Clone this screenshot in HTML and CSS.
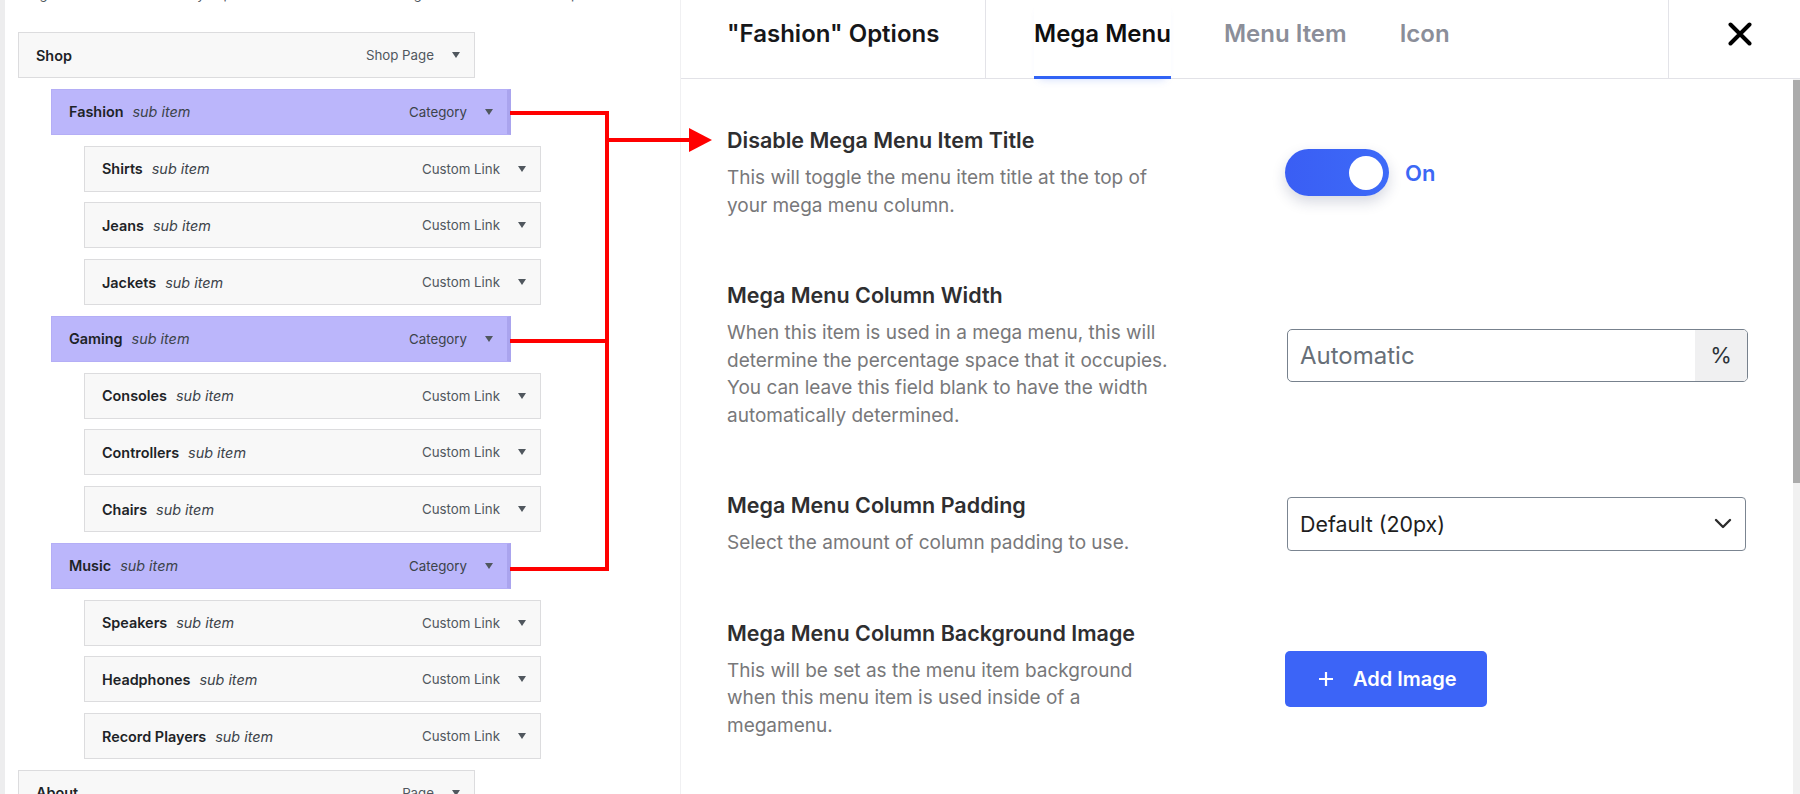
FILE: index.html
```html
<!DOCTYPE html>
<html lang="en">
<head>
<meta charset="utf-8">
<title>Mega Menu Options</title>
<link rel="stylesheet" href="styles.css">
</head>
<body>
<div class="page">
  <aside class="menu-panel">
    <p class="hint">Drag the items into the order you prefer. Click the arrow on the right of the item to reveal options.</p>
    <ul class="menu-list">
      <li class="item depth-0"><span class="name">Shop</span><span class="type">Shop Page</span><span class="caret"></span></li>
      <li class="item depth-1 hl"><span class="name">Fashion</span><span class="sub">sub item</span><span class="type">Category</span><span class="caret"></span></li>
      <li class="item depth-2"><span class="name">Shirts</span><span class="sub">sub item</span><span class="type">Custom Link</span><span class="caret"></span></li>
      <li class="item depth-2"><span class="name">Jeans</span><span class="sub">sub item</span><span class="type">Custom Link</span><span class="caret"></span></li>
      <li class="item depth-2"><span class="name">Jackets</span><span class="sub">sub item</span><span class="type">Custom Link</span><span class="caret"></span></li>
      <li class="item depth-1 hl"><span class="name">Gaming</span><span class="sub">sub item</span><span class="type">Category</span><span class="caret"></span></li>
      <li class="item depth-2"><span class="name">Consoles</span><span class="sub">sub item</span><span class="type">Custom Link</span><span class="caret"></span></li>
      <li class="item depth-2"><span class="name">Controllers</span><span class="sub">sub item</span><span class="type">Custom Link</span><span class="caret"></span></li>
      <li class="item depth-2"><span class="name">Chairs</span><span class="sub">sub item</span><span class="type">Custom Link</span><span class="caret"></span></li>
      <li class="item depth-1 hl"><span class="name">Music</span><span class="sub">sub item</span><span class="type">Category</span><span class="caret"></span></li>
      <li class="item depth-2"><span class="name">Speakers</span><span class="sub">sub item</span><span class="type">Custom Link</span><span class="caret"></span></li>
      <li class="item depth-2"><span class="name">Headphones</span><span class="sub">sub item</span><span class="type">Custom Link</span><span class="caret"></span></li>
      <li class="item depth-2"><span class="name">Record Players</span><span class="sub">sub item</span><span class="type">Custom Link</span><span class="caret"></span></li>
      <li class="item depth-0"><span class="name">About</span><span class="type">Page</span><span class="caret"></span></li>
    </ul>
  </aside>

  <section class="options">
    <header class="opt-header">
      <div class="opt-title">"Fashion" Options</div>
      <nav class="tabs">
        <span class="tab active">Mega Menu</span>
        <span class="tab">Menu Item</span>
        <span class="tab">Icon</span>
      </nav>
      <div class="close">
        <svg width="24" height="24" viewBox="0 0 24 24"><path d="M2.5 2.5 L21.5 21.5 M21.5 2.5 L2.5 21.5" stroke="#000" stroke-width="4" stroke-linecap="round" fill="none"/></svg>
      </div>
    </header>
    <div class="opt-body">
      <div class="opt-content">
        <div class="row">
          <div class="label">
            <h3>Disable Mega Menu Item Title</h3>
            <p>This will toggle the menu item title at the top of<br>your mega menu column.</p>
          </div>
          <div class="control">
            <div class="toggle"><span class="knob"></span></div>
            <span class="toggle-label">On</span>
          </div>
        </div>
        <div class="row">
          <div class="label">
            <h3>Mega Menu Column Width</h3>
            <p>When this item is used in a mega menu, this will<br>determine the percentage space that it occupies.<br>You can leave this field blank to have the width<br>automatically determined.</p>
          </div>
          <div class="control">
            <div class="input">
              <span class="input-text">Automatic</span>
              <span class="addon">%</span>
            </div>
          </div>
        </div>
        <div class="row">
          <div class="label">
            <h3>Mega Menu Column Padding</h3>
            <p>Select the amount of column padding to use.</p>
          </div>
          <div class="control">
            <div class="select">
              <span class="select-text">Default (20px)</span>
              <svg width="18" height="11" viewBox="0 0 18 11"><path d="M2 2 L9 9 L16 2" stroke="#2c2c2c" stroke-width="2.4" fill="none" stroke-linecap="round" stroke-linejoin="round"/></svg>
            </div>
          </div>
        </div>
        <div class="row">
          <div class="label">
            <h3>Mega Menu Column Background Image</h3>
            <p>This will be set as the menu item background<br>when this menu item is used inside of a<br>megamenu.</p>
          </div>
          <div class="control">
            <div class="btn">
              <svg width="16" height="16" viewBox="0 0 16 16"><path d="M8 1 V15 M1 8 H15" stroke="#fff" stroke-width="2.2" fill="none"/></svg>
              <span>Add Image</span>
            </div>
          </div>
        </div>
      </div>
      <div class="scrollbar"><div class="thumb"></div></div>
    </div>
  </section>

  <svg class="annot" width="1800" height="794" viewBox="0 0 1800 794">
    <g stroke="#ff0000" stroke-width="4" fill="none">
      <path d="M510 113 H607"/>
      <path d="M510 341 H607"/>
      <path d="M510 569 H607"/>
      <path d="M607 111 V571"/>
      <path d="M605 140 H692"/>
    </g>
    <polygon points="689,128 712,140 689,152" fill="#ff0000"/>
  </svg>
</div>
</body>
</html>
```

FILE: styles.css
```css
* { box-sizing: border-box; }

html, body {
  margin: 0;
  padding: 0;
  background: #fff;
}

body {
  font-family: Inter, "Noto Sans", "Liberation Sans", sans-serif;
  overflow: hidden;
}

.page {
  position: relative;
  display: flex;
  width: 1800px;
  height: 794px;
  overflow: hidden;
}

/* ---------- left menu structure ---------- */
.menu-panel {
  width: 680px;
  flex: none;
  height: 794px;
  border-left: 5px solid #ededee;
  padding-left: 13px;
  background: #fff;
}

.hint {
  margin: -15px 0 29px 0;
  font-size: 13px;
  line-height: 18px;
  color: #50575e;
  white-space: nowrap;
}

.menu-list {
  list-style: none;
  margin: 0;
  padding: 0;
  display: flex;
  flex-direction: column;
  gap: 10.77px;
}

.item {
  display: flex;
  align-items: center;
  height: 46px;
  flex: none;
  border: 1px solid #dcdcde;
  background: #f8f8f8;
  padding: 0 14px 0 17px;
  font-size: 13.3px;
  color: #1d2327;
}

.depth-0 { width: 457px; }
.depth-1 { width: 460px; margin-left: 33px; }
.depth-2 { width: 457px; margin-left: 66px; }

.item.hl {
  background: #bbb6fb;
  border-color: #b4aef6;
  border-right: 4px solid #aaa4ee;
}

.name {
  font-size: 14.4px;
  font-weight: 600;
  color: #1d2327;
}

.sub {
  margin-left: 9px;
  font-size: 14.4px;
  font-style: italic;
  color: #3c434a;
}

.type {
  margin-left: auto;
  color: #50575e;
}

.hl .type { color: #3c434a; }

.caret {
  width: 0;
  height: 0;
  margin-left: 18px;
  border-left: 4.5px solid transparent;
  border-right: 4.5px solid transparent;
  border-top: 6px solid #50575e;
}

/* ---------- right options panel ---------- */
.options {
  flex: 1;
  display: flex;
  flex-direction: column;
  border-left: 1px solid #f0f0f2;
  background: #fff;
}

.opt-header {
  display: flex;
  height: 79px;
  border-bottom: 1px solid #e2e2e7;
  flex: none;
}

.opt-title {
  width: 305px;
  padding-left: 46px;
  border-right: 1px solid #e3e3e8;
  font-size: 24px;
  font-weight: 600;
  line-height: 67px;
  color: #16171a;
  white-space: nowrap;
}

.tabs {
  display: flex;
  gap: 53px;
  padding-left: 48px;
}

.tab {
  height: 79px;
  margin-bottom: -1px;
  font-size: 24px;
  font-weight: 600;
  line-height: 67px;
  color: #8b8e99;
  white-space: nowrap;
}

.tab.active {
  color: #0f0f10;
  border-bottom: 3px solid #3163f5;
  box-shadow: 0 6px 8px -6px rgba(49, 99, 245, 0.25);
}

.close {
  margin-left: auto;
  width: 132px;
  border-left: 1px solid #e3e3e8;
  padding-left: 59px;
  padding-top: 22px;
}

.close svg { display: block; }

.opt-body {
  flex: 1;
  display: flex;
  min-height: 0;
}

.opt-content {
  flex: 1;
  padding: 47px 0 0 46px;
  display: flex;
  flex-direction: column;
  gap: 62px;
}

.row {
  display: grid;
  grid-template-columns: 558px 1fr;
  align-items: center;
}

.label h3 {
  margin: 0 0 10px 0;
  font-size: 21.5px;
  line-height: 28px;
  font-weight: 600;
  color: #2e2e30;
  white-space: nowrap;
}

.label p {
  margin: 0;
  font-size: 19px;
  line-height: 27.5px;
  color: #78787a;
  white-space: nowrap;
}

.control {
  display: flex;
  align-items: center;
}

.toggle {
  width: 104px;
  height: 47px;
  border-radius: 24px;
  background: linear-gradient(90deg, #3a5ef4, #3d6af8);
  box-shadow: 0 6px 14px rgba(30, 40, 90, 0.18);
  display: flex;
  align-items: center;
  justify-content: flex-end;
  padding-right: 6px;
}

.knob {
  width: 34px;
  height: 34px;
  border-radius: 50%;
  background: #fff;
}

.toggle-label {
  margin-left: 16px;
  font-size: 22px;
  font-weight: 600;
  color: #3c68f5;
}

.input {
  width: 461px;
  height: 53px;
  margin-left: 2px;
  border: 1px solid #77818d;
  border-radius: 5px;
  display: flex;
  overflow: hidden;
}

.input-text {
  flex: 1;
  padding-left: 12px;
  font-size: 24px;
  line-height: 51px;
  color: #676f78;
}

.addon {
  width: 52px;
  background: #f0f0f1;
  font-size: 22px;
  line-height: 51px;
  text-align: center;
  color: #2c3338;
}

.select {
  width: 459px;
  height: 54px;
  margin-left: 2px;
  border: 1px solid #7b8591;
  border-radius: 4px;
  display: flex;
  align-items: center;
  padding: 0 13px 0 12px;
}

.select-text {
  flex: 1;
  font-size: 21.4px;
  color: #1e1e1e;
}

.btn {
  width: 202px;
  height: 56px;
  border-radius: 5px;
  background: #3c64f7;
  display: flex;
  align-items: center;
  padding-left: 33px;
  gap: 19px;
  color: #fff;
  font-size: 20px;
  font-weight: 600;
}

.btn svg { flex: none; }

.scrollbar {
  width: 7px;
  flex: none;
  background: #f1f1f1;
}

.thumb {
  margin-top: 1px;
  height: 403px;
  background: #ababab;
}

/* annotation arrows drawn over both panels */
.annot {
  position: absolute;
  left: 0;
  top: 0;
  pointer-events: none;
}
```
